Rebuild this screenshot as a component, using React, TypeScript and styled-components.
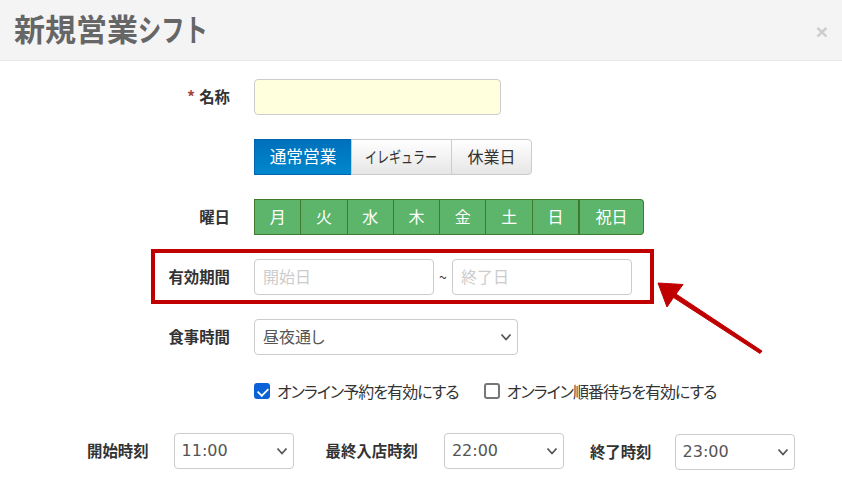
import React from "react";
import styled, { createGlobalStyle } from "styled-components";

const FONT = `"Noto Sans CJK JP", "Noto Sans", sans-serif`;
const LATIN_FONT = `"DejaVu Sans", "Noto Sans CJK JP", sans-serif`;

const Global = createGlobalStyle`
  html, body { margin: 0; padding: 0; background: #fff; overflow: hidden; }
  * { box-sizing: border-box; }
  body { font-family: ${FONT}; color: #333; font-feature-settings: "palt"; }
`;

const Page = styled.div`
  position: relative;
  width: 842px;
  height: 482px;
  overflow: hidden;
`;

const Header = styled.header`
  display: flex;
  align-items: center;
  justify-content: space-between;
  height: 61px;
  padding: 0 14px;
  background: #f4f4f4;
  border-bottom: 1px solid #eaeaea;
`;

const Title = styled.h1`
  margin: 0 0 5px;
  font-size: 31px;
  font-weight: 700;
  line-height: 50px;
  color: #666;
`;

const Narrow = styled.span<{ $origin?: string }>`
  display: inline-block;
  font-feature-settings: normal;
  transform: scaleX(0.75);
  transform-origin: ${(p) => p.$origin ?? "center"};
`;

const Close = styled.span`
  font-family: "Liberation Sans", sans-serif;
  font-size: 21px;
  font-weight: 700;
  line-height: 1;
  color: #ccc;
  margin-top: 2px;
`;

const Form = styled.form`
  padding-top: 18px;
`;

const Row = styled.div<{ $gap?: number }>`
  display: grid;
  grid-template-columns: 230px 1fr;
  column-gap: 24px;
  align-items: center;
  margin-bottom: ${(p) => p.$gap ?? 24}px;
`;

const Label = styled.label`
  font-size: 15.4px;
  line-height: 34px;
  height: 36px;
  font-weight: 700;
  text-align: right;
  color: #333;
  white-space: nowrap;
`;

const Req = styled.span`
  color: #a94442;
  margin-right: 4px;
  font-size: 16px;
`;

const Input = styled.input<{ $w: number; $bg?: string }>`
  display: block;
  width: ${(p) => p.$w}px;
  height: 36px;
  padding: 0 8px 3px;
  font-family: ${FONT};
  font-size: 16px;
  color: #555;
  background: ${(p) => p.$bg ?? "#fff"};
  border: 1px solid #ccc;
  border-radius: 4px;
  outline: none;
  &::placeholder { color: #ccc; opacity: 1; }
`;

const Group = styled.div`
  display: flex;
`;

const Seg = styled.button<{ $w: number; $active?: boolean }>`
  width: ${(p) => p.$w}px;
  height: 36px;
  padding: 0 0 2px;
  margin-left: -1px;
  font-family: ${FONT};
  font-size: ${(p) => (p.$active ? 16.7 : 16)}px;
  white-space: nowrap;
  color: ${(p) => (p.$active ? "#fff" : "#333")};
  background: ${(p) => (p.$active ? "linear-gradient(#0070bb, #0088cc)" : "linear-gradient(#ffffff, #e6e6e6)")};
  border: 1px solid ${(p) => (p.$active ? "#0066b3" : "#ccc")};
  &:first-child { margin-left: 0; border-radius: 0; }
  &:last-child { border-radius: 0 4px 4px 0; }
`;

const Day = styled.button<{ $w: number }>`
  width: ${(p) => p.$w}px;
  height: 36px;
  padding: 0 0 2px;
  margin-left: -1px;
  font-family: ${FONT};
  font-size: 16px;
  color: #fff;
  background: #5cb56b;
  border: 1px solid #3f7a30;
  &:first-child { margin-left: 0; }
  &:last-child { border-radius: 0 4px 4px 0; border-left-width: 2px; }
`;

const DateRange = styled.div`
  display: flex;
  align-items: center;
`;

const Tilde = styled.span`
  width: 18px;
  text-align: center;
  font-size: 14px;
  color: #333;
`;

const SelectWrap = styled.div<{ $w: number; $mt?: number }>`
  position: relative;
  width: ${(p) => p.$w}px;
  height: 36px;
  margin-top: ${(p) => p.$mt ?? 0}px;
`;

const Select = styled.select<{ $latin?: boolean }>`
  display: block;
  width: 100%;
  height: 36px;
  padding: ${(p) => (p.$latin ? "0 7px 2px" : "0 8px 2px")};
  font-family: ${(p) => (p.$latin ? LATIN_FONT : FONT)};
  font-size: 16px;
  color: #555;
  background: #fff;
  border: 1px solid #ccc;
  border-radius: 4px;
  outline: none;
  appearance: none;
  font-feature-settings: "palt";
`;

const Chevron = styled.svg`
  position: absolute;
  right: 6px;
  top: 14px;
  pointer-events: none;
`;

const Caret = () => (
  <Chevron width="12" height="9" viewBox="0 0 12 9">
    <path d="M1.500 1.500 L6 6.500 L10.500 1.500" fill="none" stroke="#555" strokeWidth="1.800" />
  </Chevron>
);

const Checks = styled.div`
  display: flex;
  align-items: center;
  height: 24px;
  margin: 24px 0 0 254px;
`;

const Check = styled.label`
  display: flex;
  align-items: center;
  font-size: 16px;
  letter-spacing: -0.97px;
  line-height: 22px;
  color: #333;
  margin-right: 25px;
  white-space: nowrap;
`;

const Box = styled.input`
  position: relative;
  appearance: none;
  width: 16px;
  height: 16px;
  margin: 0 7px 0 0;
  border: 2px solid #767676;
  border-radius: 3px;
  background: #fff;
  &:checked {
    background: #0b62d6;
    border-color: #0b62d6;
  }
  &:checked::after {
    content: "";
    position: absolute;
    left: 3px;
    top: 0px;
    width: 6px;
    height: 10px;
    border: solid #fff;
    border-width: 0 2px 2px 0;
    transform: rotate(45deg) scale(0.85);
  }
`;

const Times = styled.div`
  display: flex;
  align-items: flex-start;
  margin: 30px 0 0 87px;
`;

const TimeLabel = styled.label<{ $ml?: number; $mr?: number; $mt?: number }>`
  font-size: 15.4px;
  font-weight: 700;
  line-height: 34px;
  color: #333;
  white-space: nowrap;
  margin-left: ${(p) => p.$ml ?? 0}px;
  margin-right: ${(p) => p.$mr ?? 25}px;
  margin-top: ${(p) => p.$mt ?? 0}px;
`;

const Highlight = styled.div`
  position: absolute;
  left: 151px;
  top: 249px;
  width: 503px;
  height: 55px;
  border: 4px solid #c00000;
  pointer-events: none;
`;

const Arrow = styled.svg`
  position: absolute;
  left: 650px;
  top: 275px;
`;

const days = ["月", "火", "水", "木", "金", "土", "日"];

export default function App() {
  return (
    <Page>
      <Global />
      <Header>
        <Title>新規営業<Narrow $origin="left">シフト</Narrow></Title>
        <Close>×</Close>
      </Header>
      <Form>
        <Row>
          <Label><Req>*</Req>名称</Label>
          <Input $w={247} $bg="#ffffdd" />
        </Row>
        <Row>
          <span />
          <Group>
            <Seg type="button" $w={98} $active>通常営業</Seg>
            <Seg type="button" $w={101}><Narrow>イレギュラー</Narrow></Seg>
            <Seg type="button" $w={81}>休業日</Seg>
          </Group>
        </Row>
        <Row>
          <Label>曜日</Label>
          <Group>
            {days.map((d) => (
              <Day type="button" key={d} $w={47.3}>{d}</Day>
            ))}
            <Day type="button" $w={66}>祝日</Day>
          </Group>
        </Row>
        <Row>
          <Label>有効期間</Label>
          <DateRange>
            <Input $w={180} placeholder="開始日" />
            <Tilde>~</Tilde>
            <Input $w={180} placeholder="終了日" />
          </DateRange>
        </Row>
        <Row $gap={0}>
          <Label>食事時間</Label>
          <SelectWrap $w={264}>
            <Select defaultValue="昼夜通し">
              <option>昼夜通し</option>
            </Select>
            <Caret />
          </SelectWrap>
        </Row>
        <Checks>
          <Check><Box type="checkbox" defaultChecked />オンライン予約を有効にする</Check>
          <Check><Box type="checkbox" />オンライン順番待ちを有効にする</Check>
        </Checks>
        <Times>
          <TimeLabel>開始時刻</TimeLabel>
          <SelectWrap $w={120}>
            <Select $latin defaultValue="11:00"><option>11:00</option></Select>
            <Caret />
          </SelectWrap>
          <TimeLabel $ml={32} $mr={26}>最終入店時刻</TimeLabel>
          <SelectWrap $w={120}>
            <Select $latin defaultValue="22:00"><option>22:00</option></Select>
            <Caret />
          </SelectWrap>
          <TimeLabel $ml={26} $mr={23} $mt={1}>終了時刻</TimeLabel>
          <SelectWrap $w={120} $mt={1}>
            <Select $latin defaultValue="23:00"><option>23:00</option></Select>
            <Caret />
          </SelectWrap>
        </Times>
      </Form>
      <Highlight />
      <Arrow width="120" height="85" viewBox="0 0 120 85">
        <path d="M8 8 L33 9.5 L26 19 L112 76 L110 78.500 L23.500 22.500 L17 32 Z" fill="#c00000" stroke="#c00000" strokeWidth="1" />
      </Arrow>
    </Page>
  );
}
